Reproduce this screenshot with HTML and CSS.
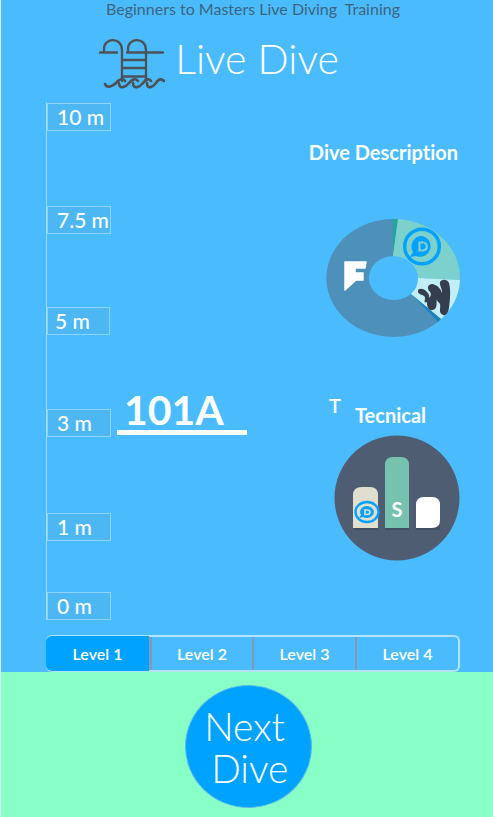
FILE: index.html
```html
<!DOCTYPE html>
<html lang="en">
<head>
<meta charset="utf-8">
<meta name="viewport" content="width=device-width, initial-scale=1">
<title>Live Dive</title>
<link rel="stylesheet" href="styles.css">
</head>
<body>
<header class="header">
  <p class="tagline">Beginners to Masters Live Diving&nbsp; Training</p>
  <div class="brand">
    <svg class="brand-icon" viewBox="0 0 66 52" aria-hidden="true">
      <g fill="none" stroke="#4d5156" stroke-width="2.3" stroke-linecap="round">
        <path d="M1 14.500H18M5 14V11C5 -1 23 -1 23 12V43M28 14.500H64M29 14V11C29 -1 47 -1 47 12V43"/>
        <path d="M23 22H47M23 30H47M23 38.500H47"/>
        <path stroke-width="2.600" d="M6 46C8 51 14 48 17 45C19 42 24 39 26 43M20 45C20 52 27 49 30 45C33 41 37 40 39 43M34 45C34 52 41 49 44 45C47 41 50 40 52 43M48 45C48 52 54 49 57 45C60 40 63 41 65 43"/>
      </g>
    </svg>
    <h1 class="title">Live Dive</h1>
  </div>
</header>

<main class="main">
  <div class="board">
    <ol class="scale">
      <li class="mark"><span class="height">10 m</span></li>
      <li class="mark"><span class="height">7.5 m</span></li>
      <li class="mark"><span class="height tight">5 m</span></li>
      <li class="mark"><span class="height">3 m</span><strong class="dive">101A</strong></li>
      <li class="mark"><span class="height">1 m</span></li>
      <li class="mark"><span class="height">0 m</span></li>
    </ol>
    <div class="charts">
      <section class="chart">
        <h2 class="chart-title">Dive Description</h2>
        <svg class="donut" viewBox="0 0 134 118" role="img" aria-label="Dive description">
          <path fill="#4d90ba" d="M67 0A67 59 0 1 0 112 103L85 75A25 22 0 1 1 67 37Z"/>
          <path fill="#22a69b" d="M67 0H72L67 37Z"/>
          <path fill="#7dd1cc" d="M72 0A67 59 0 0 1 134 61L92 59A25 22 0 0 0 67 37Z"/>
          <path fill="#c2eef5" d="M134 61A67 59 0 0 1 115 100L85 75A25 22 0 0 0 92 59Z"/>
          <path fill="#2080b7" d="M115 100L112 103L85 75Z"/>
          <path fill="#fff" stroke="#fff" stroke-width="1.500" stroke-linejoin="round" d="M19 43H40L39 49H29V54H37V61H30L19 71Z"/>
          <g fill="none" stroke="#00a2ff">
            <circle cx="96" cy="27.500" r="17.300" stroke-width="3.500"/>
            <path fill="#00a2ff" stroke="none" d="M96 17A10.500 10.500 0 1 1 90 37L84 38L87 33A10.500 10.500 0 0 1 96 17Z"/>
            <path stroke="#7dd1cc" stroke-width="2.200" d="M93.500 23.500H97C102 24 102 31 97 31.500H93.500Z"/>
          </g>
          <path fill="#343e4e" d="M92 73C91 69 97 69 100 72C102 74 104 76 103 79C104 78 106 76 104 73C99 68 104 63 109 66C112 67 115 70 116 74C117 71 113 66 114 63C116 60 121 60 123 64C125 71 124 81 123 89C122 94 120 97 117 96C112 94 115 89 114 85C113 83 110 82 111 79C110 83 112 90 107 91C102 92 101 87 101 83C96 85 101 79 98 77C96 75 93 76 92 73Z"/>
        </svg>
      </section>
      <section class="chart">
        <h2 class="chart-title technical"><span class="flag">T</span><span>Tecnical</span></h2>
        <svg class="bars" viewBox="0 0 126 126" role="img" aria-label="Technical">
          <circle cx="63" cy="63" r="62.500" fill="#4f5d73"/>
          <path fill="#434f64" d="M20 90H44V95H20ZM51 90H75V95H51ZM82 90H106V95H82Z"/>
          <path fill="#e0dfcf" d="M19 93V60Q19 52 28 52H36Q44 52 44 60V93Z"/>
          <path fill="#77c2ae" d="M51 93V30Q51 22 59 22H67Q75 22 75 30V93Z"/>
          <path fill="#fff" d="M82 93V70Q82 62 90 62H98Q106 62 106 70V85Q106 93 98 93Z"/>
          <g fill="none" stroke="#00a2ff">
            <ellipse cx="33" cy="77" rx="11.500" ry="10" stroke-width="2.400"/>
            <path fill="#00a2ff" stroke="none" d="M33 71A7 6 0 1 1 29 82L25 83L27 80A7 6 0 0 1 33 71Z"/>
            <path stroke="#e0dfcf" stroke-width="1.600" d="M31 75H33C37 75 37 79.500 33 79.500H31Z"/>
          </g>
          <text class="bar-label" x="63" y="82" text-anchor="middle">S</text>
        </svg>
      </section>
    </div>
  </div>
  <nav class="levels" aria-label="Level">
    <button class="level active" type="button" aria-pressed="true">Level 1</button>
    <button class="level" type="button">Level 2</button>
    <button class="level" type="button">Level 3</button>
    <button class="level" type="button">Level 4</button>
  </nav>
</main>

<footer class="footer">
  <button class="next" type="button">Next<br>&nbsp;Dive</button>
</footer>
</body>
</html>
```
FILE: styles.css
```css
* {
  box-sizing: border-box;
}

body {
  display: flex;
  flex-direction: column;
  min-height: 100vh;
  margin: 0;
  border-left: 1px solid #d5eefc;
  background: #4abcfe;
  color: #fff;
  font-family: Lato, "Liberation Sans", sans-serif;
  font-variant-ligatures: none;
}

h1,
h2,
p,
ol {
  margin: 0;
  padding: 0;
  font-weight: inherit;
}

button {
  margin: 0;
  padding: 0;
  border: 0;
  background: none;
  color: inherit;
  font-family: inherit;
  cursor: pointer;
}

.header {
  text-align: center;
}

.tagline {
  padding-left: 12px;
  color: #3c6482;
  font-size: 16px;
  line-height: 18px;
}

.brand {
  display: flex;
  justify-content: center;
  gap: 10px;
  height: 84px;
  padding: 15px 56px 0 0;
}

.brand-icon {
  width: 66px;
  height: 52px;
  margin-top: 5px;
}

.title {
  font-size: 41px;
  font-weight: 300;
  line-height: 52px;
}

.main {
  padding: 0 33px 0 45px;
}

.board {
  display: flex;
  justify-content: space-between;
  margin-bottom: 15px;
}

.scale {
  display: grid;
  grid-template-rows: 103px 101px 102px 104px 79px 28px;
  padding-top: 1px;
  border-left: 1px solid #9bdaff;
  list-style: none;
}

.mark {
  display: flex;
  align-items: flex-start;
  gap: 6px;
  height: 28px;
}

.height {
  width: 64px;
  height: 28px;
  padding-left: 9px;
  border: 1px solid #8fd4fc;
  background: #4db7f4;
  font-size: 21px;
  font-weight: 500;
  line-height: 26px;
}

.tight {
  width: 63px;
  padding-left: 7px;
}

.dive {
  align-self: flex-end;
  width: 130px;
  margin-bottom: 2px;
  padding-left: 7px;
  border-bottom: 5px solid #fff;
  font-size: 41px;
  font-weight: 700;
  line-height: 40px;
}

.charts {
  display: flex;
  flex-direction: column;
  gap: 56px;
  padding-top: 38px;
}

.chart {
  display: flex;
  flex-direction: column;
  align-items: flex-end;
}

.chart-title {
  padding-right: 2px;
  font-size: 20px;
  font-weight: 700;
  line-height: 24px;
}

.donut {
  width: 134px;
  height: 118px;
  margin-top: 55px;
}

.technical {
  display: flex;
  align-items: flex-end;
  gap: 14px;
  padding-right: 34px;
}

.flag {
  padding-bottom: 10px;
  font-weight: 600;
}

.bars {
  width: 126px;
  height: 126px;
  margin-top: 8px;
}

.bar-label {
  fill: #fff;
  font-size: 20px;
  font-weight: 700;
}

.levels {
  display: grid;
  grid-template-columns: repeat(4, 1fr);
  height: 37px;
  border: 2px solid #b5e3ff;
  border-left: 0;
  border-radius: 6px;
}

.level {
  border-left: 2px solid #7c9bb9;
  font-size: 16px;
  font-weight: 600;
}

.active {
  margin: -1px 0;
  border-left: 0;
  border-radius: 6px 0 0 6px;
  background: #00a2ff;
}

.active + .level {
  border-left-width: 3px;
}

.footer {
  display: flex;
  flex: 1;
  justify-content: center;
  align-items: flex-start;
  padding: 13px 0 9px 3px;
  background: #87ffc6;
}

.next {
  width: 127px;
  height: 123px;
  padding-right: 8px;
  border: 1px solid #58b9f5;
  border-radius: 50%;
  background: #00a2ff;
  font-size: 39px;
  font-weight: 300;
  line-height: 42px;
}
```
